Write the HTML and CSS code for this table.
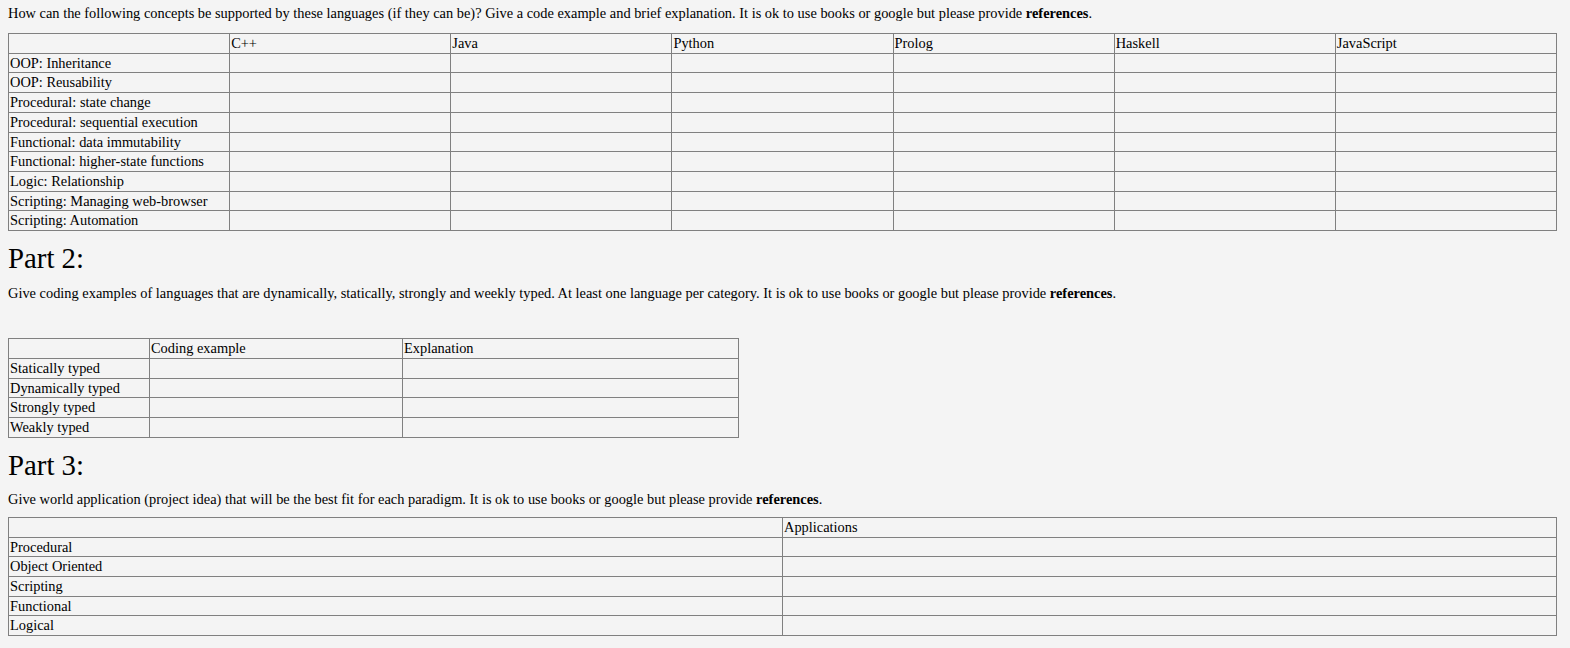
FILE: index.html
```html
<!DOCTYPE html>
<html>
<head>
<meta charset="utf-8">
<link rel="stylesheet" href="styles.css">
</head>
<body>
<div class="page">
  <p class="intro intro-first">How can the following concepts be supported by these languages (if they can be)? Give a code example and brief explanation. It is ok to use books or google but please provide <b>references</b>.</p>
  <table class="grid grid-wide grid-seven">
    <tr><td></td><td>C++</td><td>Java</td><td>Python</td><td>Prolog</td><td>Haskell</td><td>JavaScript</td></tr>
    <tr><td>OOP: Inheritance</td><td></td><td></td><td></td><td></td><td></td><td></td></tr>
    <tr><td>OOP: Reusability</td><td></td><td></td><td></td><td></td><td></td><td></td></tr>
    <tr><td>Procedural: state change</td><td></td><td></td><td></td><td></td><td></td><td></td></tr>
    <tr><td>Procedural: sequential execution</td><td></td><td></td><td></td><td></td><td></td><td></td></tr>
    <tr><td>Functional: data immutability</td><td></td><td></td><td></td><td></td><td></td><td></td></tr>
    <tr><td>Functional: higher-state functions</td><td></td><td></td><td></td><td></td><td></td><td></td></tr>
    <tr><td>Logic: Relationship</td><td></td><td></td><td></td><td></td><td></td><td></td></tr>
    <tr><td>Scripting: Managing web-browser</td><td></td><td></td><td></td><td></td><td></td><td></td></tr>
    <tr><td>Scripting: Automation</td><td></td><td></td><td></td><td></td><td></td><td></td></tr>
  </table>

  <h2 class="part">Part 2:</h2>
  <p class="intro intro-spaced">Give coding examples of languages that are dynamically, statically, strongly and weekly typed. At least one language per category. It is ok to use books or google but please provide <b>references</b>.</p>
  <table class="grid grid-typed">
    <colgroup><col class="c-label"><col class="c-code"><col class="c-expl"></colgroup>
    <tr><td></td><td>Coding example</td><td>Explanation</td></tr>
    <tr><td>Statically typed</td><td></td><td></td></tr>
    <tr><td>Dynamically typed</td><td></td><td></td></tr>
    <tr><td>Strongly typed</td><td></td><td></td></tr>
    <tr><td>Weakly typed</td><td></td><td></td></tr>
  </table>

  <h2 class="part">Part 3:</h2>
  <p class="intro intro-last">Give world application (project idea) that will be the best fit for each paradigm. It is ok to use books or google but please provide <b>references</b>.</p>
  <table class="grid grid-wide grid-two">
    <tr><td></td><td>Applications</td></tr>
    <tr><td>Procedural</td><td></td></tr>
    <tr><td>Object Oriented</td><td></td></tr>
    <tr><td>Scripting</td><td></td></tr>
    <tr><td>Functional</td><td></td></tr>
    <tr><td>Logical</td><td></td></tr>
  </table>
</div>
</body>
</html>
```

FILE: styles.css
```css
html, body {
  margin: 0;
  padding: 0;
  background: #f4f4f4;
}

body {
  font-family: "Liberation Serif", "Times New Roman", serif;
  color: #000;
}

.page {
  padding: 0 8px 20px 8px;
}

.intro {
  font-size: 14.4px;
  line-height: 16.5px;
  margin: 9.6px 0 11px 0;
}

.intro-first {
  margin-top: 5px;
  margin-bottom: 11.5px;
}

.intro-spaced {
  margin-bottom: 37px;
}

.intro-last {
  margin-top: 9.3px;
  margin-bottom: 9.5px;
}

.part {
  font-size: 28.8px;
  line-height: 33px;
  font-weight: normal;
  margin: 11px 0 0 0;
}

.grid {
  border-collapse: collapse;
  table-layout: fixed;
  font-size: 14.4px;
  line-height: 16.7px;
}

.grid td {
  border: 1px solid #808080;
  padding: 1px 1px;
  vertical-align: top;
  white-space: nowrap;
  overflow: hidden;
}

.grid-wide {
  width: 1549px;
}

.grid-typed {
  width: 730px;
}

.c-label { width: 141px; }
.c-code { width: 253px; }
.c-expl { width: 336px; }
```
